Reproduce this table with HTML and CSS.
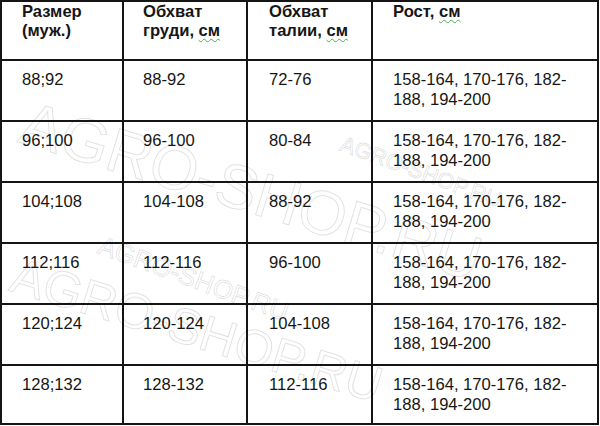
FILE: index.html
```
<!DOCTYPE html>
<html lang="ru">
<head>
<meta charset="utf-8">
<title>Размеры</title>
<link rel="stylesheet" href="styles.css">
</head>
<body>
<div class="page">
  <div class="grid">
    <div class="cell head c1">Размер<br>(муж.)</div>
    <div class="cell head c2">Обхват<br>груди, <span class="sp">см</span></div>
    <div class="cell head c3">Обхват<br>талии, <span class="sp">см</span></div>
    <div class="cell head c4">Рост, <span class="sp">см</span></div>

    <div class="cell c1">88;92</div>
    <div class="cell c2">88-92</div>
    <div class="cell c3">72-76</div>
    <div class="cell c4">158-164, 170-176, 182-<br>188, 194-200</div>

    <div class="cell c1">96;100</div>
    <div class="cell c2">96-100</div>
    <div class="cell c3">80-84</div>
    <div class="cell c4">158-164, 170-176, 182-<br>188, 194-200</div>

    <div class="cell c1">104;108</div>
    <div class="cell c2">104-108</div>
    <div class="cell c3">88-92</div>
    <div class="cell c4">158-164, 170-176, 182-<br>188, 194-200</div>

    <div class="cell c1">112;116</div>
    <div class="cell c2">112-116</div>
    <div class="cell c3">96-100</div>
    <div class="cell c4">158-164, 170-176, 182-<br>188, 194-200</div>

    <div class="cell c1">120;124</div>
    <div class="cell c2">120-124</div>
    <div class="cell c3">104-108</div>
    <div class="cell c4">158-164, 170-176, 182-<br>188, 194-200</div>

    <div class="cell c1">128;132</div>
    <div class="cell c2">128-132</div>
    <div class="cell c3">112-116</div>
    <div class="cell c4">158-164, 170-176, 182-<br>188, 194-200</div>
  </div>
  <div class="wm wm-big1">AGRO-SHOP.RU</div>
  <div class="wm wm-big2">AGRO-SHOP.RU</div>
  <div class="wm wm-small1">AGRO-SHOP.RU</div>
  <div class="wm wm-small2">AGRO-SHOP.RU</div>
</div>
</body>
</html>
```

FILE: styles.css
```
html, body {
  margin: 0;
  padding: 0;
  background: #fff;
}

.page {
  position: relative;
  width: 600px;
  height: 426px;
  overflow: hidden;
  font-family: "Liberation Sans", Arial, sans-serif;
  font-size: 16.6px;
  color: #161616;
}

.grid {
  display: grid;
  width: 595px;
  grid-template-columns: 120px 122px 123px 224px;
  grid-template-rows: 57px repeat(5, 59px) 57px;
  gap: 2px;
  padding: 2px;
  background: #151515;
}

.cell {
  background: #fff;
  line-height: 20px;
  padding-top: 9px;
  white-space: nowrap;
}

.cell.head {
  font-weight: bold;
  line-height: 19px;
  padding-top: 0;
}

.c1 { padding-left: 20px; }
.c2 { padding-left: 19px; }
.c3 { padding-left: 21px; }
.c4 { padding-left: 20px; }

.sp {
  text-decoration: underline wavy #4caf50;
  text-decoration-thickness: 1px;
  text-underline-offset: 2px;
}

.wm {
  position: absolute;
  font-family: "Liberation Sans", Arial, sans-serif;
  color: transparent;
  -webkit-text-stroke: 1px rgba(0, 0, 0, 0.12);
  white-space: nowrap;
  line-height: 1;
  transform-origin: 0 0;
  pointer-events: none;
}

.wm-big1 {
  left: 32px;
  top: 92px;
  font-size: 62px;
  transform: rotate(17deg);
}

.wm-big2 {
  left: 20px;
  top: 250px;
  font-size: 50px;
  transform: rotate(17deg);
}

.wm-small1 {
  left: 104px;
  top: 232px;
  font-size: 26px;
  transform: rotate(20deg);
}

.wm-small2 {
  left: 345px;
  top: 133px;
  font-size: 22px;
  transform: rotate(20deg);
}
```
